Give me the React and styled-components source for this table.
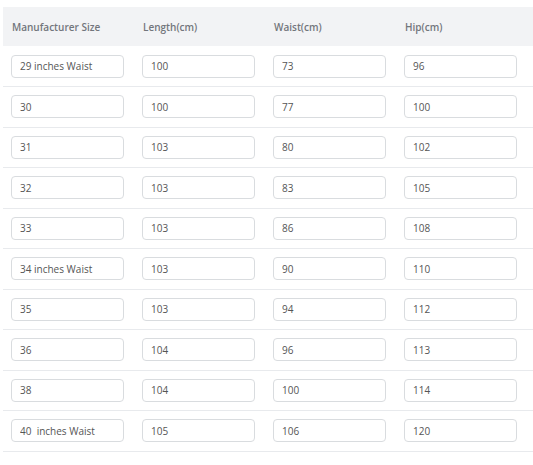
import React from 'react';
import styled, { createGlobalStyle } from 'styled-components';

const GlobalStyle = createGlobalStyle`
    body {
        margin: 0;
        background: #fff;
        font-family: "Open Sans", "Noto Sans", sans-serif;
    }
`;

const Wrapper = styled.div`
    padding: 7px 0 0 3px;
    width: 530px;
    overflow: hidden;
`;

const Table = styled.table`
    border-collapse: collapse;
    width: 540px;
    table-layout: fixed;
`;

const HeadCell = styled.th`
    box-sizing: border-box;
    background: #f2f3f5;
    color: #72767c;
    font-size: 10px;
    font-weight: 600;
    text-align: left;
    height: 39px;
    padding: 0 0 0 9px;
    width: ${p => p.w || 131}px;
`;

const Row = styled.tr`
    border-bottom: 1px solid #e8eaed;
    height: 40.5px;
`;

const Cell = styled.td`
    box-sizing: border-box;
    padding: 0 10px 0 8px;
`;

const Field = styled.input`
    box-sizing: border-box;
    width: 113px;
    height: 23px;
    border: 1px solid #d9dcdf;
    border-radius: 4px;
    padding: 0 8px;
    font-family: "Open Sans", "Noto Sans", sans-serif;
    font-size: 10px;
    color: #555;
    background: #fff;
    outline: none;
    display: block;
`;

const rows = [
    ['29 inches Waist', '100', '73', '96'],
    ['30', '100', '77', '100'],
    ['31', '103', '80', '102'],
    ['32', '103', '83', '105'],
    ['33', '103', '86', '108'],
    ['34 inches Waist', '103', '90', '110'],
    ['35', '103', '94', '112'],
    ['36', '104', '96', '113'],
    ['38', '104', '100', '114'],
    ['40  inches Waist', '105', '106', '120'],
];

export default function App() {
    return <>
        <GlobalStyle />
        <Wrapper>
            <Table>
                <thead>
                    <tr>
                        <HeadCell>Manufacturer Size</HeadCell>
                        <HeadCell>Length(cm)</HeadCell>
                        <HeadCell>Waist(cm)</HeadCell>
                        <HeadCell>Hip(cm)</HeadCell>
                        <HeadCell w={16}></HeadCell>
                    </tr>
                </thead>
                <tbody>
                    {rows.map((r, i) => (
                        <Row key={i}>
                            {r.map((v, j) => (
                                <Cell key={j}><Field defaultValue={v} readOnly /></Cell>
                            ))}
                            <Cell />
                        </Row>
                    ))}
                </tbody>
            </Table>
        </Wrapper>
    </>;
}
